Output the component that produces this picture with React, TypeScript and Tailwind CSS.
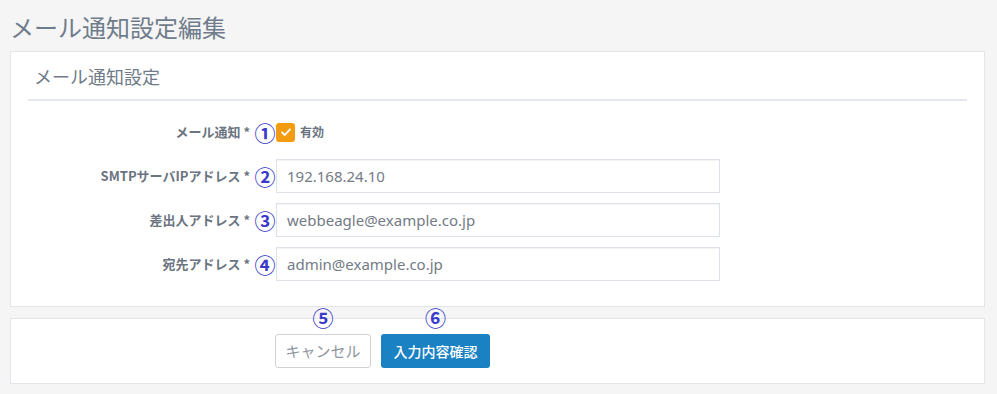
import React from "react";

const jp = { fontFamily: '"Noto Sans CJK JP", "Noto Sans", sans-serif' };

function Num({ n }: { n: string }) {
  return (
    <span className="text-[21px] leading-none font-bold text-[#3a3acb]" style={jp}>
      {n}
    </span>
  );
}

function Row({ label, num, children }: { label: string; num: string; children: React.ReactNode }) {
  return (
    <div className="flex items-center h-[34px]">
      <div className="w-[226px] pr-[4px] text-right text-[13px] font-bold text-[#6b7480]" style={jp}>
        {label} *
      </div>
      <div className="w-[22px] flex justify-center items-center">
        <Num n={num} />
      </div>
      {children}
    </div>
  );
}

function Input({ value }: { value: string }) {
  return (
    <div
      className="w-[444px] h-[34px] border border-[#dde1e8] bg-white flex items-center px-[10px] text-[15px] text-[#737b85]"
      style={{ fontFamily: '"Noto Sans", "Noto Sans CJK JP", sans-serif', boxShadow: "inset 0 1px 1px rgba(0,0,0,0.05)" }}
    >
      {value}
    </div>
  );
}

export default function App() {
  return (
    <div className="w-[997px] h-[394px] bg-[#f5f5f5] overflow-hidden" style={jp}>
      <div className="pl-[10px] pt-[11px] h-[43px] leading-[32px] text-[24px] text-[#6f7c8b] mb-[8px]">
        メール通知設定編集
      </div>
      <div className="ml-[10px] w-[975px] bg-white border border-[#e3e5ea] px-[17px] pb-[25px]">
        <div className="pt-[12px] pb-[11px] border-b-2 border-[#e4e8ee]">
          <div className="pl-[6px] text-[18px] leading-[24px] text-[#707b88]">メール通知設定</div>
        </div>
        <div className="mt-[14px] flex flex-col gap-[10px]">
          <Row label="メール通知" num="①">
            <div className="flex items-center gap-[5px]">
              <div className="w-[19px] h-[19px] rounded-[3px] bg-[#f39c12] flex items-center justify-center">
                <svg width="12" height="12" viewBox="0 0 12 12">
                  <path d="M2 6.3 L4.8 9 L10 3.3" fill="none" stroke="white" strokeWidth="1.8" strokeLinecap="round" strokeLinejoin="round" />
                </svg>
              </div>
              <span className="text-[12px] font-bold text-[#6b7480]">有効</span>
            </div>
          </Row>
          <Row label="SMTPサーバIPアドレス" num="②">
            <Input value="192.168.24.10" />
          </Row>
          <Row label="差出人アドレス" num="③">
            <Input value="webbeagle@example.co.jp" />
          </Row>
          <Row label="宛先アドレス" num="④">
            <Input value="admin@example.co.jp" />
          </Row>
        </div>
      </div>
      <div className="mt-[11px] ml-[10px] w-[975px] bg-white border border-[#e3e5ea] py-[15px] pl-[264px] flex gap-[10px]">
        <div className="relative">
          <div className="absolute left-0 right-0 -top-[27px] flex justify-center">
            <Num n="⑤" />
          </div>
          <button className="w-[96px] h-[34px] border border-[#cfd2d6] rounded-[3px] bg-white text-[15px] text-[#8e96a0]">
            キャンセル
          </button>
        </div>
        <div className="relative">
          <div className="absolute left-0 right-0 -top-[27px] flex justify-center">
            <Num n="⑥" />
          </div>
          <button className="w-[109px] h-[34px] rounded-[3px] bg-[#1a81c3] text-[14px] text-white font-medium">
            入力内容確認
          </button>
        </div>
      </div>
    </div>
  );
}
